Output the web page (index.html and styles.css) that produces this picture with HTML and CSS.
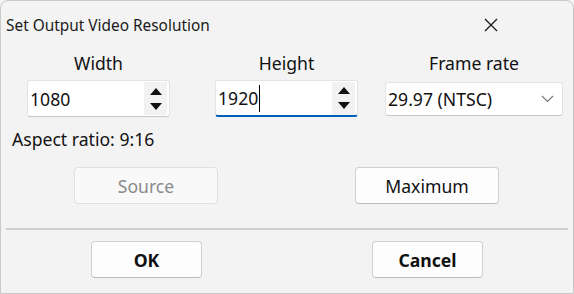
FILE: index.html
```html
<!DOCTYPE html>
<html lang="en">

<head>
  <meta charset="UTF-8">
  <meta name="viewport" content="width=device-width, initial-scale=1.0">
  <title>Set Output Video Resolution</title>
  <link rel="stylesheet" href="styles.css">
</head>

<body>
  <div class="dialog">
    <div class="titlebar">
      <span class="title">Set Output Video Resolution</span>
      <button class="close" aria-label="Close">
        <svg width="14" height="14" viewBox="0 0 14 14">
          <path d="M1 1 L13 13 M13 1 L1 13" stroke="#1a1a1a" stroke-width="1.3" fill="none" />
        </svg>
      </button>
    </div>

    <div class="fields">
      <div class="field">
        <label class="label">Width</label>
        <div class="spin">
          <span class="value">1080</span>
          <div class="arrows">
            <svg width="12" height="7" viewBox="0 0 12 7"><path d="M6 0 L12 7 L0 7 Z" fill="#111" /></svg>
            <svg width="12" height="7" viewBox="0 0 12 7"><path d="M0 0 L12 0 L6 7 Z" fill="#111" /></svg>
          </div>
        </div>
      </div>
      <div class="field">
        <label class="label">Height</label>
        <div class="spin focus">
          <span class="value">1920<i class="caret"></i></span>
          <div class="arrows">
            <svg width="12" height="7" viewBox="0 0 12 7"><path d="M6 0 L12 7 L0 7 Z" fill="#111" /></svg>
            <svg width="12" height="7" viewBox="0 0 12 7"><path d="M0 0 L12 0 L6 7 Z" fill="#111" /></svg>
          </div>
        </div>
      </div>
      <div class="field rate">
        <label class="label">Frame rate</label>
        <div class="select">
          <span class="value">29.97 (NTSC)</span>
          <svg width="13" height="8" viewBox="0 0 13 8"><path d="M1 1 L6.5 6.5 L12 1" stroke="#777" stroke-width="1.1" fill="none" /></svg>
        </div>
      </div>
    </div>

    <p class="aspect">Aspect ratio: 9:16</p>

    <div class="presets">
      <button class="btn" disabled>Source</button>
      <button class="btn">Maximum</button>
    </div>

    <hr class="sep">

    <div class="footer">
      <button class="btn bold ok">OK</button>
      <button class="btn bold cancel">Cancel</button>
    </div>
  </div>
</body>

</html>
```

FILE: styles.css
```css
html,
body {
  margin: 0;
  padding: 0;
  background: #f3f3f3;
}

.dialog {
  width: 574px;
  height: 294px;
  box-sizing: border-box;
  border: 1px solid #c9c9c9;
  border-radius: 8px 8px 0 0;
  background: #f3f3f3;
  font-family: "Noto Sans", "Open Sans", sans-serif;
  color: #111;
}

.titlebar {
  height: 47px;
  display: flex;
  align-items: center;
  justify-content: space-between;
  padding-left: 5px;
}

.title {
  font-size: 15.4px;
  color: #1a1a1a;
  margin-top: 1px;
}

.close {
  width: 46px;
  height: 46px;
  margin-right: 59px;
  border: none;
  background: transparent;
  display: flex;
  align-items: center;
  justify-content: center;
  padding: 0;
}

.fields {
  display: flex;
  padding-left: 26px;
}

.field {
  width: 143px;
  display: flex;
  flex-direction: column;
  align-items: center;
  margin-right: 45px;
}

.field.rate {
  width: 178px;
  margin-left: -18px;
  margin-right: 0;
}

.label {
  font-size: 17.6px;
  line-height: 24px;
  height: 32px;
  padding-top: 3px;
  box-sizing: border-box;
}

.spin {
  width: 143px;
  height: 37px;
  box-sizing: border-box;
  background: #fff;
  border: 1px solid #e3e3e3;
  border-bottom-color: #c6c6c6;
  border-radius: 3px;
  display: flex;
  align-items: center;
  justify-content: space-between;
}

.spin.focus {
  border-bottom: 2px solid #005fb8;
}

.value {
  font-size: 17.6px;
  padding-left: 2px;
  display: flex;
  align-items: center;
}

.caret {
  display: inline-block;
  width: 1px;
  height: 27px;
  background: #000;
  margin-left: 1px;
}

.arrows {
  width: 23px;
  height: 33px;
  margin-right: 2px;
  background: #f2f2f2;
  display: flex;
  flex-direction: column;
  align-items: center;
  justify-content: center;
  gap: 8px;
}

.select {
  width: 178px;
  height: 34px;
  margin-top: 2px;
  box-sizing: border-box;
  background: #fff;
  border: 1px solid #e3e3e3;
  border-bottom-color: #c6c6c6;
  border-radius: 3px;
  display: flex;
  align-items: center;
  justify-content: space-between;
  padding-right: 8px;
}

.aspect {
  margin: 10px 0 0 11px;
  font-size: 17.6px;
  line-height: 24px;
}

.presets {
  display: flex;
  gap: 137px;
  padding-left: 73px;
  margin-top: 16px;
}

.btn {
  width: 144px;
  height: 37px;
  box-sizing: border-box;
  background: #fdfdfd;
  border: 1px solid #d0d0d0;
  border-bottom-color: #bdbdbd;
  border-radius: 4px;
  font-family: "Noto Sans", "Open Sans", sans-serif;
  font-size: 17.6px;
  color: #111;
  padding: 0;
}

.btn:disabled {
  background: #f9f9f9;
  border-color: #e0e0e0;
  color: #8a8a8a;
}

.sep {
  margin: 24px 5px 0 5px;
  border: none;
  height: 2px;
  background: #cfcfcf;
}

.footer {
  display: flex;
  gap: 170px;
  padding-left: 90px;
  margin-top: 11px;
}

.btn.bold {
  width: 111px;
  font-weight: bold;
}
```
